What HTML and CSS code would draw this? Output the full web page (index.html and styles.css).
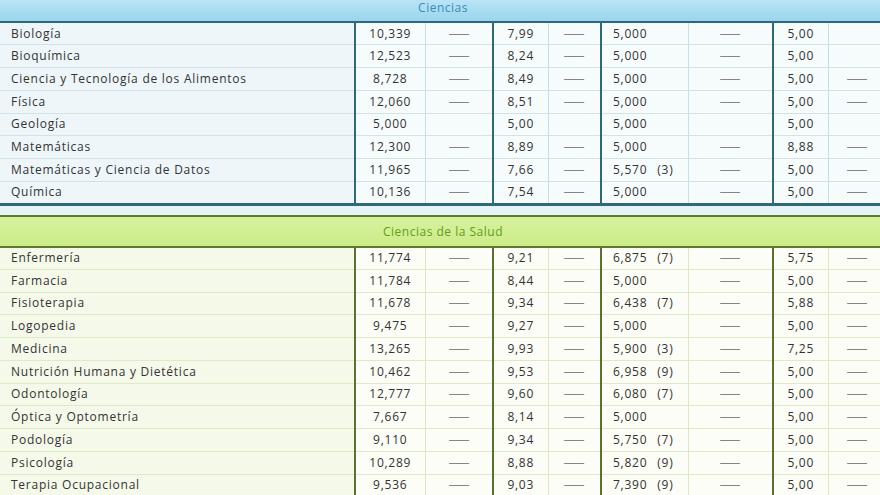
FILE: index.html
```html
<!DOCTYPE html>
<html lang="es">
<head>
<meta charset="utf-8">
<title>Notas de corte</title>
<link rel="stylesheet" href="styles.css">
</head>
<body>
<div class="page">
  <table class="grades sec-blue">
    <colgroup>
      <col class="c-name"><col class="c-n1"><col class="c-d1"><col class="c-n2"><col class="c-d2"><col class="c-n3"><col class="c-d3"><col class="c-n4"><col class="c-d4">
    </colgroup>
    <thead>
      <tr class="band"><th colspan="9">Ciencias</th></tr>
    </thead>
    <tbody>
      <tr><td class="name">Biología</td><td class="num">10,339</td><td class="dash"><span>—</span></td><td class="num b">7,99</td><td class="dash"><span>—</span></td><td class="lnum">5,000</td><td class="dash"><span>—</span></td><td class="num b">5,00</td><td class="dash"></td></tr>
      <tr><td class="name">Bioquímica</td><td class="num">12,523</td><td class="dash"><span>—</span></td><td class="num b">8,24</td><td class="dash"><span>—</span></td><td class="lnum">5,000</td><td class="dash"><span>—</span></td><td class="num b">5,00</td><td class="dash"></td></tr>
      <tr><td class="name">Ciencia y Tecnología de los Alimentos</td><td class="num">8,728</td><td class="dash"><span>—</span></td><td class="num b">8,49</td><td class="dash"><span>—</span></td><td class="lnum">5,000</td><td class="dash"><span>—</span></td><td class="num b">5,00</td><td class="dash"><span>—</span></td></tr>
      <tr><td class="name">Física</td><td class="num">12,060</td><td class="dash"><span>—</span></td><td class="num b">8,51</td><td class="dash"><span>—</span></td><td class="lnum">5,000</td><td class="dash"><span>—</span></td><td class="num b">5,00</td><td class="dash"><span>—</span></td></tr>
      <tr><td class="name">Geología</td><td class="num">5,000</td><td class="dash"></td><td class="num b">5,00</td><td class="dash"></td><td class="lnum">5,000</td><td class="dash"></td><td class="num b">5,00</td><td class="dash"></td></tr>
      <tr><td class="name">Matemáticas</td><td class="num">12,300</td><td class="dash"><span>—</span></td><td class="num b">8,89</td><td class="dash"><span>—</span></td><td class="lnum">5,000</td><td class="dash"><span>—</span></td><td class="num b">8,88</td><td class="dash"><span>—</span></td></tr>
      <tr><td class="name">Matemáticas y Ciencia de Datos</td><td class="num">11,965</td><td class="dash"><span>—</span></td><td class="num b">7,66</td><td class="dash"><span>—</span></td><td class="lnum">5,570<span class="fn">(3)</span></td><td class="dash"><span>—</span></td><td class="num b">5,00</td><td class="dash"><span>—</span></td></tr>
      <tr><td class="name">Química</td><td class="num">10,136</td><td class="dash"><span>—</span></td><td class="num b">7,54</td><td class="dash"><span>—</span></td><td class="lnum">5,000</td><td class="dash"><span>—</span></td><td class="num b">5,00</td><td class="dash"><span>—</span></td></tr>
    </tbody>
  </table>

  <div class="gap"></div>

  <table class="grades sec-green">
    <colgroup>
      <col class="c-name"><col class="c-n1"><col class="c-d1"><col class="c-n2"><col class="c-d2"><col class="c-n3"><col class="c-d3"><col class="c-n4"><col class="c-d4">
    </colgroup>
    <thead>
      <tr class="band"><th colspan="9">Ciencias de la Salud</th></tr>
    </thead>
    <tbody>
      <tr><td class="name">Enfermería</td><td class="num">11,774</td><td class="dash"><span>—</span></td><td class="num b">9,21</td><td class="dash"><span>—</span></td><td class="lnum">6,875<span class="fn">(7)</span></td><td class="dash"><span>—</span></td><td class="num b">5,75</td><td class="dash"><span>—</span></td></tr>
      <tr><td class="name">Farmacia</td><td class="num">11,784</td><td class="dash"><span>—</span></td><td class="num b">8,44</td><td class="dash"><span>—</span></td><td class="lnum">5,000</td><td class="dash"><span>—</span></td><td class="num b">5,00</td><td class="dash"><span>—</span></td></tr>
      <tr><td class="name">Fisioterapia</td><td class="num">11,678</td><td class="dash"><span>—</span></td><td class="num b">9,34</td><td class="dash"><span>—</span></td><td class="lnum">6,438<span class="fn">(7)</span></td><td class="dash"><span>—</span></td><td class="num b">5,88</td><td class="dash"><span>—</span></td></tr>
      <tr><td class="name">Logopedia</td><td class="num">9,475</td><td class="dash"><span>—</span></td><td class="num b">9,27</td><td class="dash"><span>—</span></td><td class="lnum">5,000</td><td class="dash"><span>—</span></td><td class="num b">5,00</td><td class="dash"><span>—</span></td></tr>
      <tr><td class="name">Medicina</td><td class="num">13,265</td><td class="dash"><span>—</span></td><td class="num b">9,93</td><td class="dash"><span>—</span></td><td class="lnum">5,900<span class="fn">(3)</span></td><td class="dash"><span>—</span></td><td class="num b">7,25</td><td class="dash"><span>—</span></td></tr>
      <tr><td class="name">Nutrición Humana y Dietética</td><td class="num">10,462</td><td class="dash"><span>—</span></td><td class="num b">9,53</td><td class="dash"><span>—</span></td><td class="lnum">6,958<span class="fn">(9)</span></td><td class="dash"><span>—</span></td><td class="num b">5,00</td><td class="dash"><span>—</span></td></tr>
      <tr><td class="name">Odontología</td><td class="num">12,777</td><td class="dash"><span>—</span></td><td class="num b">9,60</td><td class="dash"><span>—</span></td><td class="lnum">6,080<span class="fn">(7)</span></td><td class="dash"><span>—</span></td><td class="num b">5,00</td><td class="dash"><span>—</span></td></tr>
      <tr><td class="name">Óptica y Optometría</td><td class="num">7,667</td><td class="dash"><span>—</span></td><td class="num b">8,14</td><td class="dash"><span>—</span></td><td class="lnum">5,000</td><td class="dash"><span>—</span></td><td class="num b">5,00</td><td class="dash"><span>—</span></td></tr>
      <tr><td class="name">Podología</td><td class="num">9,110</td><td class="dash"><span>—</span></td><td class="num b">9,34</td><td class="dash"><span>—</span></td><td class="lnum">5,750<span class="fn">(7)</span></td><td class="dash"><span>—</span></td><td class="num b">5,00</td><td class="dash"><span>—</span></td></tr>
      <tr><td class="name">Psicología</td><td class="num">10,289</td><td class="dash"><span>—</span></td><td class="num b">8,88</td><td class="dash"><span>—</span></td><td class="lnum">5,820<span class="fn">(9)</span></td><td class="dash"><span>—</span></td><td class="num b">5,00</td><td class="dash"><span>—</span></td></tr>
      <tr><td class="name">Terapia Ocupacional</td><td class="num">9,536</td><td class="dash"><span>—</span></td><td class="num b">9,03</td><td class="dash"><span>—</span></td><td class="lnum">7,390<span class="fn">(9)</span></td><td class="dash"><span>—</span></td><td class="num b">5,00</td><td class="dash"><span>—</span></td></tr>
    </tbody>
  </table>
</div>
</body>
</html>
```

FILE: styles.css
```css
html, body {
  margin: 0;
  padding: 0;
  background: #e6f4f8;
  overflow: hidden;
}

.page {
  width: 886px;
  margin-top: -7px;
  font-family: "Open Sans", "Liberation Sans", sans-serif;
  font-size: 12px;
  letter-spacing: 0.75px;
  color: #333333;
}

.grades {
  width: 886px;
  table-layout: fixed;
  border-collapse: collapse;
}

.c-name { width: 355px; }
.c-n1 { width: 70px; }
.c-d1 { width: 68px; }
.c-n2 { width: 55px; }
.c-d2 { width: 53px; }
.c-n3 { width: 87px; }
.c-d3 { width: 85px; }
.c-n4 { width: 55px; }
.c-d4 { width: 58px; }

.band th {
  height: 28px;
  padding: 0;
  font-weight: normal;
  text-align: center;
  font-size: 12px;
  letter-spacing: 0.5px;
}

.grades td {
  height: 22.75px;
  padding: 0;
  box-sizing: border-box;
  white-space: nowrap;
  line-height: 16px;
}

.name { padding-left: 11px !important; text-align: left; }
.num { text-align: center; }
.lnum { text-align: left; padding-left: 11px !important; }
.fn { margin-left: 10px; }
.dash {
  text-align: center;
  color: #858585;
  letter-spacing: 0;
}
.dash span {
  display: inline-block;
  transform: scaleX(1.8);
}

/* Blue section */
.sec-blue .band th {
  background: linear-gradient(#c4e9f7, #99d5ee);
  color: #3a8db4;
  border-bottom: 2px solid #2f6878;
}
.sec-blue td {
  background: #f6fbfc;
  border-bottom: 1px solid #d2e2e7;
}
.sec-blue td.name { background: #eef6f9; }
.sec-blue tbody tr:last-child td { border-bottom: 3px solid #2f6878; }
.sec-blue .num,
.sec-blue .lnum { border-left: 2px solid #2f6878; }
.sec-blue .dash { border-left: 1px solid #c3e0ea; }

.gap { height: 9px; background: #e6f4f8; }

/* Green section */
.sec-green .band th {
  height: 29px;
  background: linear-gradient(#d7f29f, #cbec88);
  color: #679a20;
  border-top: 2px solid #5e7a2c;
  border-bottom: 2px solid #5e7a2c;
}
.sec-green td {
  background: #fbfdf6;
  border-bottom: 1px solid #dfe9c6;
}
.sec-green td.name { background: #f5f9ea; }
.sec-green .num,
.sec-green .lnum { border-left: 2px solid #5c7030; }
.sec-green .dash { border-left: 1px solid #dde8c0; }
```
